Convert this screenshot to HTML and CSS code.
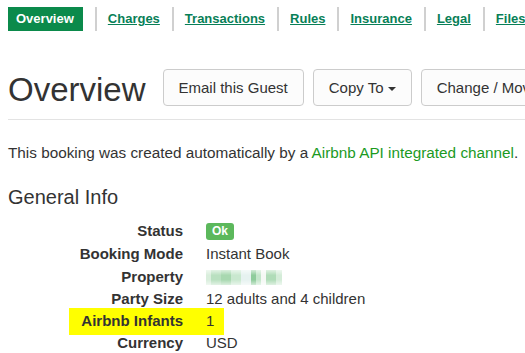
FILE: index.html
```html
<!DOCTYPE html>
<html lang="en">

<head>
  <meta charset="utf-8">
  <title>Booking Overview</title>
  <link rel="stylesheet" href="styles.css">
</head>

<body>

  <!-- Tabs -->
  <ul class="tabs">
    <li><a href="#overview" class="active">Overview</a></li>
    <li><a href="#charges">Charges</a></li>
    <li><a href="#transactions">Transactions</a></li>
    <li><a href="#rules">Rules</a></li>
    <li><a href="#insurance">Insurance</a></li>
    <li><a href="#legal">Legal</a></li>
    <li><a href="#files">Files</a></li>
  </ul>

  <!-- Header -->
  <div class="page-header">
    <h1>Overview</h1>
    <div class="actions">
      <button class="btn">Email this Guest</button>
      <button class="btn">Copy To <span class="caret"></span></button>
      <button class="btn">Change / Move Booking</button>
    </div>
  </div>

  <p class="note">This booking was created automatically by a <span class="channel">Airbnb API integrated channel</span>.</p>

  <h2>General Info</h2>

  <div class="info">
    <div class="row tall">
      <div class="label">Status</div>
      <div class="value"><span class="badge">Ok</span></div>
    </div>
    <div class="row tall">
      <div class="label">Booking Mode</div>
      <div class="value">Instant Book</div>
    </div>
    <div class="row">
      <div class="label">Property</div>
      <div class="value"><span class="blurred"></span></div>
    </div>
    <div class="row">
      <div class="label">Party Size</div>
      <div class="value">12 adults and 4 children</div>
    </div>
    <div class="row marked">
      <div class="label">Airbnb Infants</div>
      <div class="value">1</div>
    </div>
    <div class="row">
      <div class="label">Currency</div>
      <div class="value">USD</div>
    </div>
  </div>

</body>

</html>
```

FILE: styles.css
```css
html, body {
    overflow: hidden;
}

body {
    font-family: "Liberation Sans", Arial, sans-serif;
    font-size: 15px;
    color: #333;
    background-color: #fff;
    margin: 0;
    padding: 7px 8px 0 8px;
    white-space: nowrap;
}

/* tabs */
.tabs {
    display: flex;
    list-style: none;
    margin: 0;
    padding: 0;
}

.tabs li {
    padding: 0 12px;
}

.tabs li:first-child {
    padding-left: 0;
}

.tabs li + li {
    border-left: 2px solid #d0d0d0;
    padding-left: 11px;
}

.tabs a {
    display: block;
    font-size: 13px;
    font-weight: bold;
    line-height: 16px;
    padding: 4px 0;
    color: #087f57;
    text-decoration: underline;
}

.tabs a.active {
    background-color: #0b8a4b;
    color: #fff;
    text-decoration: none;
    padding: 4px 9px 4px 8px;
}

/* header */
.page-header {
    display: flex;
    align-items: center;
    margin-top: 38px;
    padding-bottom: 13px;
    border-bottom: 1px solid #e3e3e3;
    margin-right: -300px;
}

h1 {
    font-size: 33px;
    font-weight: normal;
    line-height: 37px;
    margin: 0 17px 0 0;
    position: relative;
    top: 2px;
}

.actions {
    display: flex;
    gap: 9px;
}

.btn {
    font-family: "Liberation Sans", Arial, sans-serif;
    font-size: 15px;
    color: #333;
    background-color: #fcfcfc;
    border: 1px solid #ccc;
    border-radius: 4px;
    height: 37px;
    padding: 0 15px;
}

.caret {
    display: inline-block;
    width: 0;
    height: 0;
    border-top: 4px solid #333;
    border-left: 4px solid transparent;
    border-right: 4px solid transparent;
    vertical-align: middle;
    margin-left: 0;
}

.note {
    font-size: 15.3px;
    margin: 23px 0 0 0;
    line-height: 20px;
}

.channel {
    color: #1c9a1f;
}

h2 {
    font-size: 20px;
    font-weight: normal;
    line-height: 22px;
    margin: 23px 0 0 0;
}

/* info list */
.info {
    margin-top: 12px;
}

.row {
    display: flex;
    line-height: 22px;
    position: relative;
}

.row.tall {
    height: 23px;
}

.label {
    width: 175px;
    text-align: right;
    font-weight: bold;
    position: relative;
}

.value {
    margin-left: 23px;
    position: relative;
}

.marked::before {
    content: "";
    position: absolute;
    left: 61px;
    top: -2px;
    width: 155px;
    height: 27px;
    background-color: #ffff00;
}

.badge {
    display: inline-block;
    background-color: #5cb85c;
    color: #fff;
    font-size: 12px;
    font-weight: bold;
    line-height: 13px;
    padding: 2px 6px 2px 6px;
    border-radius: 3px;
    vertical-align: 1px;
}

.blurred {
    display: inline-block;
    width: 76px;
    height: 15px;
    vertical-align: -3px;
    background:
        linear-gradient(to bottom, rgba(255, 255, 255, 0.6), rgba(255, 255, 255, 0) 35%, rgba(255, 255, 255, 0) 65%, rgba(255, 255, 255, 0.6)),
        linear-gradient(to right,
            #d9eedc 0, #d9eedc 5px,
            #b9e0c0 5px, #b9e0c0 15px,
            #a8d8b0 15px, #a8d8b0 25px,
            #c9e8cf 25px, #c9e8cf 35px,
            #e6f2f0 35px, #e6f2f0 45px,
            #8fcc9c 45px, #8fcc9c 50px,
            #c4e6cb 50px, #c4e6cb 55px,
            #f4f8f4 55px, #f4f8f4 60px,
            #b0dcb8 60px, #b0dcb8 70px,
            #d4ecd8 70px, #d4ecd8 76px);
}
```
